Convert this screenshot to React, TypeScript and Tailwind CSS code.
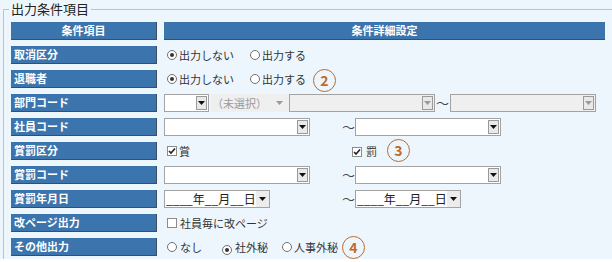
import React from "react";

const FONT = { fontFamily: '"MS UI Gothic","Noto Sans CJK JP","Noto Sans",sans-serif' };

function Radio({ checked }: { checked?: boolean }) {
  return (
    <span className="inline-flex w-[10px] h-[10px] rounded-full border border-[#707070] bg-white items-center justify-center shrink-0">
      {checked && <span className="w-[4px] h-[4px] rounded-full bg-[#333]" />}
    </span>
  );
}

function Check({ checked }: { checked?: boolean }) {
  return (
    <span className="inline-flex w-[10px] h-[10px] border border-[#8c8c8c] bg-white items-center justify-center shrink-0">
      {checked && (
        <svg width="8" height="8" viewBox="0 0 8 8">
          <path d="M1 4 L3 6 L7 1.5" stroke="#222" strokeWidth="1.6" fill="none" />
        </svg>
      )}
    </span>
  );
}

function Arrow({ light }: { light?: boolean }) {
  return (
    <svg width="7" height="4" viewBox="0 0 7 4">
      <path d="M0 0 L7 0 L3.5 4 Z" fill={light ? "#9a9a9a" : "#111"} />
    </svg>
  );
}

function DropBtn({ light }: { light?: boolean }) {
  return (
    <span className="flex items-center justify-center w-[11px] h-[14px] my-auto mr-[1px] border border-[#9a9a9a] bg-[#e9e9e9]">
      <Arrow light={light} />
    </span>
  );
}

function Label({ children, center }: { children: React.ReactNode; center?: boolean }) {
  return (
    <div
      className={`w-[146px] h-[18px] shrink-0 bg-[#3c75ad] border-b border-r border-[#3a4f66] text-white font-bold text-[11px] leading-[17px] flex items-center ${
        center ? "justify-center" : "pl-[3px]"
      }`}
    >
      {children}
    </div>
  );
}

function Circle({ n }: { n: string }) {
  return (
    <span className="inline-flex w-[23px] h-[23px] -my-[3px] rounded-full border-[1.5px] border-[#c06a28] text-[#c06a28] text-[14px] font-bold items-center justify-center shrink-0 bg-transparent">
      {n}
    </span>
  );
}

function Tilde() {
  return <span className="text-[13px] text-[#444] leading-none">～</span>;
}

export default function App() {
  return (
    <div className="w-[612px] h-[262px] bg-white overflow-hidden" style={FONT}>
      <div className="h-[259px] bg-[#eef6fd] pt-[1px]">
        <fieldset className="ml-[3px] w-[620px] h-[258px] border-t border-l border-[#a8c8e6] pl-[7px] pt-[5px]">
          <legend className="-ml-[2px] px-[2px] text-[13px] leading-[16px] text-[#222]">出力条件項目</legend>
          <div className="flex flex-col gap-[6px] text-[11px] text-[#333]">
            {/* header */}
            <div className="flex h-[18px]">
              <Label center>条件項目</Label>
              <div className="ml-[7px] w-[441px] h-[18px] bg-[#3c75ad] border-b border-[#3a4f66] text-white font-bold text-[11px] flex items-center justify-center">
                条件詳細設定
              </div>
            </div>
            {/* 取消区分 */}
            <div className="flex h-[18px]">
              <Label>取消区分</Label>
              <div className="ml-[10px] flex items-center">
                <Radio checked />
                <span className="ml-[2px] text-[11px]">出力しない</span>
                <span className="ml-[16px]"><Radio /></span>
                <span className="ml-[2px]">出力する</span>
              </div>
            </div>
            {/* 退職者 */}
            <div className="flex h-[18px]">
              <Label>退職者</Label>
              <div className="ml-[10px] flex items-center">
                <Radio checked />
                <span className="ml-[2px]">出力しない</span>
                <span className="ml-[16px]"><Radio /></span>
                <span className="ml-[2px]">出力する</span>
                <span className="ml-[7px] mt-[3px]"><Circle n="2" /></span>
              </div>
            </div>
            {/* 部門コード */}
            <div className="flex h-[18px]">
              <Label>部門コード</Label>
              <div className="ml-[7px] flex items-center">
                <div className="flex justify-end w-[45px] h-[18px] border border-[#a3a3a3] bg-white">
                  <DropBtn />
                </div>
                <div className="ml-[2px] flex items-center w-[78px] h-[18px] bg-[#efefef] text-[#9a9a9a]">
                  <span className="ml-[1px]">（未選択）</span>
                  <span className="ml-auto mr-[6px]"><Arrow light /></span>
                </div>
                <div className="flex justify-end w-[146px] h-[18px] border border-[#a3a3a3] bg-[#efefef]">
                  <DropBtn light />
                </div>
                <span className="mx-[1px]"><Tilde /></span>
                <div className="flex justify-end w-[146px] h-[18px] border border-[#a3a3a3] bg-[#efefef]">
                  <DropBtn light />
                </div>
              </div>
            </div>
            {/* 社員コード */}
            <div className="flex h-[18px]">
              <Label>社員コード</Label>
              <div className="ml-[7px] flex items-center">
                <div className="flex justify-end w-[146px] h-[18px] border border-[#a3a3a3] bg-white">
                  <DropBtn />
                </div>
                <span className="ml-[32px] mr-[0px]"><Tilde /></span>
                <div className="flex justify-end w-[146px] h-[18px] border border-[#a3a3a3] bg-white">
                  <DropBtn />
                </div>
              </div>
            </div>
            {/* 賞罰区分 */}
            <div className="flex h-[18px]">
              <Label>賞罰区分</Label>
              <div className="ml-[10px] flex items-center">
                <Check checked />
                <span className="ml-[2px]">賞</span>
                <span className="ml-[162px]"><Check checked /></span>
                <span className="ml-[4px]">罰</span>
                <span className="ml-[10px]"><Circle n="3" /></span>
              </div>
            </div>
            {/* 賞罰コード */}
            <div className="flex h-[18px]">
              <Label>賞罰コード</Label>
              <div className="ml-[7px] flex items-center">
                <div className="flex justify-end w-[146px] h-[18px] border border-[#a3a3a3] bg-white">
                  <DropBtn />
                </div>
                <span className="ml-[32px] mr-[0px]"><Tilde /></span>
                <div className="flex justify-end w-[146px] h-[18px] border border-[#a3a3a3] bg-white">
                  <DropBtn />
                </div>
              </div>
            </div>
            {/* 賞罰年月日 */}
            <div className="flex h-[18px]">
              <Label>賞罰年月日</Label>
              <div className="ml-[7px] flex items-center">
                <div className="flex items-center w-[106px] h-[18px] border border-[#a3a3a3] bg-white">
                  <span className="ml-[1px] text-[12px] text-[#222] whitespace-pre">____年__月__日</span>
                  <span className="ml-auto flex items-center justify-center w-[18px] h-full bg-[#ececec]">
                    <Arrow />
                  </span>
                </div>
                <span className="ml-[72px] mr-[0px]"><Tilde /></span>
                <div className="flex items-center w-[106px] h-[18px] border border-[#a3a3a3] bg-white">
                  <span className="ml-[1px] text-[12px] text-[#222] whitespace-pre">____年__月__日</span>
                  <span className="ml-auto flex items-center justify-center w-[18px] h-full bg-[#ececec]">
                    <Arrow />
                  </span>
                </div>
              </div>
            </div>
            {/* 改ページ出力 */}
            <div className="flex h-[18px]">
              <Label>改ページ出力</Label>
              <div className="ml-[10px] flex items-center">
                <Check />
                <span className="ml-[3px]">社員毎に改ページ</span>
              </div>
            </div>
            {/* その他出力 */}
            <div className="flex h-[18px]">
              <Label>その他出力</Label>
              <div className="ml-[10px] flex items-center">
                <Radio />
                <span className="ml-[3px]">なし</span>
                <span className="ml-[20px]"><Radio checked /></span>
                <span className="ml-[3px]">社外秘</span>
                <span className="ml-[14px]"><Radio /></span>
                <span className="ml-[2px]">人事外秘</span>
                <span className="ml-[4px] mt-[2px]"><Circle n="4" /></span>
              </div>
            </div>
          </div>
        </fieldset>
      </div>
    </div>
  );
}
